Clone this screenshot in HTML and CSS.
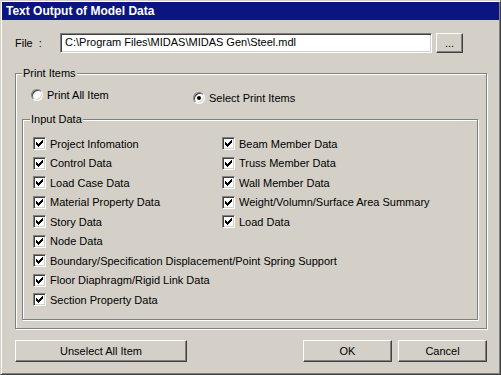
FILE: index.html
```html
<!DOCTYPE html>
<html lang="en">
<head>
  <meta charset="UTF-8" />
  <title>Text Output of Model Data</title>
  <link rel="stylesheet" href="styles.css">
</head>
<body>
  <svg class="defs" width="0" height="0">
    <symbol id="tick" viewBox="0 0 7 7">
      <path d="M0 2H1V3H2V4H3V3H4V2H5V1H6V0H7V3H6V4H5V5H4V6H3V7H2V6H1V5H0Z" fill="#000"/>
    </symbol>
  </svg>

  <div class="window">
    <div class="titlebar">Text Output of Model Data</div>

    <div class="dialog">
      <div class="file-row">
        <span class="file-label">File&nbsp;&nbsp;:</span>
        <div class="field">C:\Program Files\MIDAS\MIDAS Gen\Steel.mdl</div>
        <button class="btn btn-browse">...</button>
      </div>

      <fieldset class="group group-print">
        <legend>Print Items</legend>
        <div class="radio-row">
          <label class="option"><span class="radio"></span>Print All Item</label>
          <label class="option option-select"><span class="radio checked"></span>Select Print Items</label>
        </div>

        <fieldset class="group group-input">
          <legend>Input Data</legend>
          <div class="check-grid">
            <label class="check-item"><span class="check"><svg><use href="#tick"/></svg></span>Project Infomation</label>
            <label class="check-item"><span class="check"><svg><use href="#tick"/></svg></span>Beam Member Data</label>
            <label class="check-item"><span class="check"><svg><use href="#tick"/></svg></span>Control Data</label>
            <label class="check-item"><span class="check"><svg><use href="#tick"/></svg></span>Truss Member Data</label>
            <label class="check-item"><span class="check"><svg><use href="#tick"/></svg></span>Load Case Data</label>
            <label class="check-item"><span class="check"><svg><use href="#tick"/></svg></span>Wall Member Data</label>
            <label class="check-item"><span class="check"><svg><use href="#tick"/></svg></span>Material Property Data</label>
            <label class="check-item"><span class="check"><svg><use href="#tick"/></svg></span>Weight/Volumn/Surface Area Summary</label>
            <label class="check-item"><span class="check"><svg><use href="#tick"/></svg></span>Story Data</label>
            <label class="check-item"><span class="check"><svg><use href="#tick"/></svg></span>Load Data</label>
            <label class="check-item wide"><span class="check"><svg><use href="#tick"/></svg></span>Node Data</label>
            <label class="check-item wide"><span class="check"><svg><use href="#tick"/></svg></span>Boundary/Specification Displacement/Point Spring Support</label>
            <label class="check-item wide"><span class="check"><svg><use href="#tick"/></svg></span>Floor Diaphragm/Rigid Link Data</label>
            <label class="check-item wide"><span class="check"><svg><use href="#tick"/></svg></span>Section Property Data</label>
          </div>
        </fieldset>
      </fieldset>

      <div class="actions">
        <button class="btn btn-unselect">Unselect All Item</button>
        <button class="btn btn-ok">OK</button>
        <button class="btn btn-cancel">Cancel</button>
      </div>
    </div>
  </div>
</body>
</html>
```

FILE: styles.css
```css
:root {
  --face: #d4d0c8;
  --shadow: #808080;
  --dark: #404040;
  --light: #ffffff;
  --caption: #0a1580;
}

body {
  margin: 0;
  background-color: var(--face);
  font-family: "Liberation Sans", Arial, sans-serif;
  font-size: 11px;
  color: #000;
}

.defs {
  position: absolute;
}

.window {
  width: 501px;
  height: 375px;
  box-sizing: border-box;
  padding: 1px;
  border: 1px solid;
  border-color: var(--face) var(--dark) var(--dark) var(--face);
  box-shadow: inset 1px 1px 0 var(--light), inset -1px -1px 0 var(--shadow);
  background-color: var(--face);
}

.titlebar {
  height: 18px;
  line-height: 18px;
  padding-left: 4px;
  background-color: var(--caption);
  color: #fff;
  font-weight: bold;
  font-size: 12px;
}

.dialog {
  padding: 13px 0 0 13px;
}

.file-row {
  display: flex;
  align-items: center;
  height: 20px;
}

.file-label {
  width: 45px;
}

.field {
  width: 372px;
  height: 20px;
  box-sizing: border-box;
  padding: 0 4px;
  line-height: 16px;
  background-color: #fff;
  border: 1px solid;
  border-color: var(--shadow) var(--light) var(--light) var(--shadow);
  box-shadow: inset 1px 1px 0 var(--dark), inset -1px -1px 0 var(--face);
  white-space: nowrap;
}

.btn {
  font-family: inherit;
  font-size: 11px;
  color: #000;
  background-color: var(--face);
  border: 1px solid;
  border-color: var(--light) var(--dark) var(--dark) var(--light);
  box-shadow: inset -1px -1px 0 var(--shadow);
  padding: 0;
  height: 22px;
}

.btn-browse {
  width: 27px;
  height: 20px;
  margin-left: 4px;
  line-height: 14px;
}

/* group boxes */
.group {
  margin: 0;
  padding: 0;
  border: 1px solid var(--shadow);
  box-shadow: inset 1px 1px 0 var(--light), 1px 1px 0 var(--light);
  min-width: 0;
}

.group legend {
  padding: 0 1px;
  line-height: 13px;
  background-color: var(--face);
}

.group-print {
  width: 472px;
  box-sizing: border-box;
  margin-top: 14px;
  padding-bottom: 8px;
}

.group-print > legend {
  margin-left: 6px;
}

.radio-row {
  display: flex;
  align-items: flex-start;
  height: 16px;
  margin: 8px 0 0 15px;
}

.option {
  display: flex;
  align-items: center;
  height: 13px;
}

.option:first-child {
  width: 162px;
}

.option-select {
  margin-top: 3px;
}

.radio {
  width: 12px;
  height: 12px;
  box-sizing: border-box;
  margin-right: 4px;
  border-radius: 50%;
  background-color: #fff;
  border: 1px solid;
  border-color: var(--shadow) var(--light) var(--light) var(--shadow);
  box-shadow: inset 1px 1px 0 var(--dark), inset -1px -1px 0 var(--face);
  display: flex;
  align-items: center;
  justify-content: center;
}

.radio.checked::after {
  content: "";
  width: 4px;
  height: 4px;
  border-radius: 50%;
  background-color: #000;
}

.group-input {
  width: 456px;
  box-sizing: border-box;
  margin: 9px 0 0 6px;
  padding-bottom: 9.5px;
}

.group-input > legend {
  margin-left: 7px;
}

.check-grid {
  display: grid;
  grid-template-columns: 189px auto;
  grid-auto-rows: 19.5px;
  margin: 8px 0 0 10px;
}

.check-item {
  display: flex;
  align-items: center;
  white-space: nowrap;
}

.check-item.wide {
  grid-column: 1 / -1;
}

.check {
  width: 13px;
  height: 13px;
  box-sizing: border-box;
  margin-right: 4px;
  background-color: #fff;
  border: 1px solid;
  border-color: var(--shadow) var(--light) var(--light) var(--shadow);
  box-shadow: inset 1px 1px 0 var(--dark), inset -1px -1px 0 var(--face);
  display: flex;
  align-items: center;
  justify-content: center;
}

.check svg {
  width: 7px;
  height: 7px;
  display: block;
}

.actions {
  display: flex;
  gap: 6px;
  margin-top: 11px;
}

.btn-unselect {
  width: 172px;
}

.btn-ok {
  width: 89px;
  margin-left: auto;
  margin-right: 0;
}

.btn-cancel {
  width: 89px;
  margin-right: 12px;
}
```
